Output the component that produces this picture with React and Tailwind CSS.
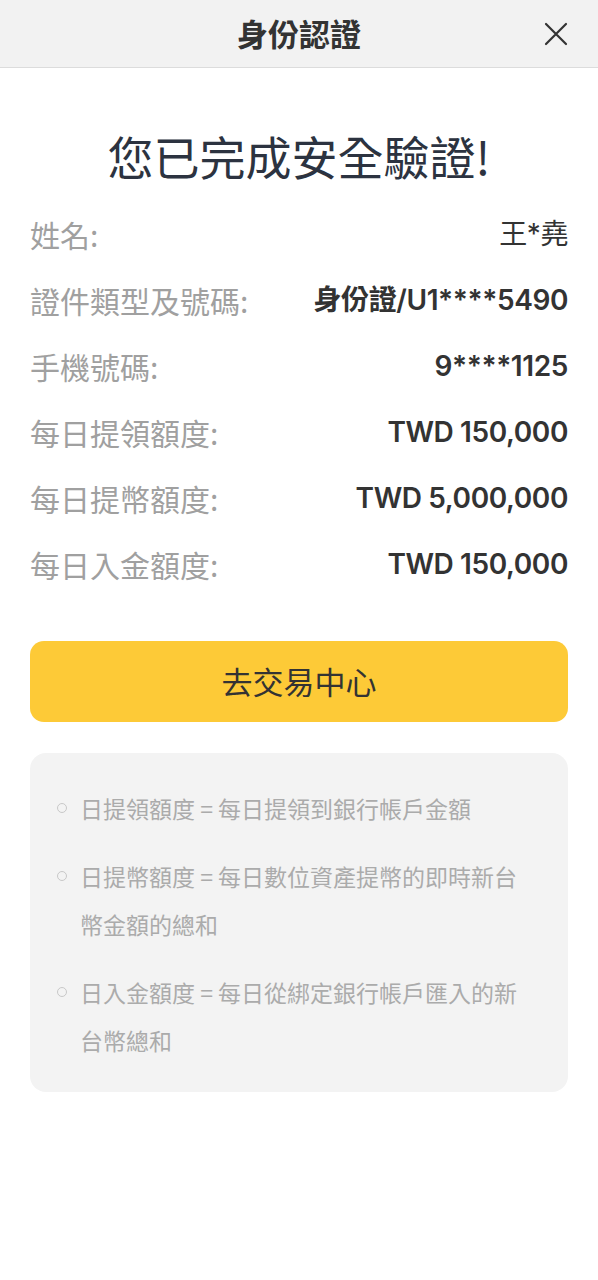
import React from 'react';

const cjk = "font-['Noto_Sans_CJK_TC','Noto_Sans_CJK_SC',sans-serif]";
const num = "font-['Inter','Noto_Sans_CJK_TC',sans-serif]";

const rows = [
  { label: '姓名:', value: '王*堯', strong: false },
  { label: '證件類型及號碼:', value: '身份證/U1****5490', strong: true },
  { label: '手機號碼:', value: '9****1125', strong: true },
  { label: '每日提領額度:', value: 'TWD 150,000', strong: true },
  { label: '每日提幣額度:', value: 'TWD 5,000,000', strong: true },
  { label: '每日入金額度:', value: 'TWD 150,000', strong: true },
];

const notes = [
  '日提領額度 = 每日提領到銀行帳戶金額',
  '日提幣額度 = 每日數位資產提幣的即時新台幣金額的總和',
  '日入金額度 = 每日從綁定銀行帳戶匯入的新台幣總和',
];

export default function App() {
  return (
    <div className={`min-h-[1280px] w-[598px] bg-white ${cjk}`}>
      {/* header */}
      <div className="relative flex h-[68px] items-center justify-center border-b border-[#dcdcdc] bg-[#f2f2f2]">
        <h1 className="text-[31px] font-bold text-[#333]">身份認證</h1>
        <button className="absolute right-[30px] top-[22px] text-[#333]">
          <svg width="24" height="24" viewBox="0 0 24 24" fill="none" stroke="currentColor" strokeWidth="2.2" strokeLinecap="round">
            <path d="M2 2 L22 22 M22 2 L2 22" />
          </svg>
        </button>
      </div>

      <div className="px-[30px]">
        <h2 className="pt-[57px] text-center text-[46px] leading-[60px] text-[#2c3340]">您已完成安全驗證!</h2>

        <div className="mt-[16px]">
          {rows.map((r) => (
            <div key={r.label} className="flex h-[66px] items-center justify-between">
              <span className="text-[30px] text-[#a0a0a0]">{r.label}</span>
              <span className={`${num} text-[28px] tracking-[-0.4px] text-[#333] ${r.strong ? 'font-semibold' : 'font-normal'}`}>{r.value}</span>
            </div>
          ))}
        </div>

        <button className="mt-[44px] flex h-[81px] w-full items-center justify-center rounded-[14px] bg-[#fdca37] text-[31px] text-[#333]">
          去交易中心
        </button>

        <div className="mt-[31px] rounded-[16px] bg-[#f3f3f3] pb-[28px] pl-[27px] pr-[43px] pt-[31px]">
          <ul className="flex flex-col gap-[20px]">
            {notes.map((n) => (
              <li key={n} className="flex text-[23px] leading-[48px] text-[#ababab]">
                <span className="mr-[13px] mt-[19px] h-[10px] w-[10px] shrink-0 rounded-full border border-[#c8c8c8]" />
                <span>{n}</span>
              </li>
            ))}
          </ul>
        </div>
      </div>
    </div>
  );
}
